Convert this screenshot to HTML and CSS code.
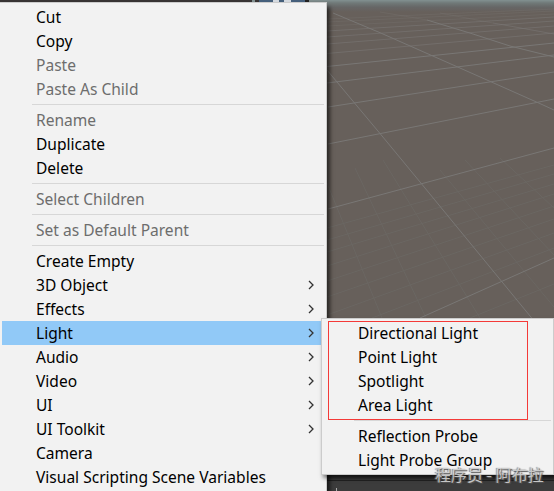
FILE: index.html
```html
<!DOCTYPE html>
<html lang="en">
<head>
<meta charset="utf-8">
<title>Hierarchy context menu</title>
<link rel="stylesheet" href="styles.css">
</head>
<body>
<div class="editor">
  <svg class="scene" width="554" height="491" viewBox="0 0 554 491">
    <defs>
      <linearGradient id="sky" x1="0" y1="0" x2="0" y2="1">
        <stop offset="0" stop-color="#829191"/><stop offset=".25" stop-color="#707978"/><stop offset=".6" stop-color="#666666"/><stop offset="1" stop-color="#67605b"/>
      </linearGradient>
    </defs>
    <rect width="554" height="491" fill="#67605b"/>
    <rect width="554" height="12" fill="url(#sky)"/>
    <g fill="none" stroke="#6c6965" stroke-width="1" opacity=".75">
      <path d="M327 228L554 165M327 240L554 174M327 252L554 184M327 266L554 194M327 281L554 206M327 297L554 219M327 315L554 233M372 318L554 248M470 318L554 284"/>
      <path d="M327 183L382 318M355 168L426 318M383 160L480 318M440 170L554 307M465 160L554 255M500 158L554 208"/>
    </g>
    <g fill="none" stroke="#797775" stroke-width="1">
      <path d="M420 318L554 258M328 209L554 148M328 144L554 99M328 107L554 72M327 83L554 55M327 66.500L554 43"/>
      <path d="M327 70L352 100L380 133.500L421.700 184L531.700 318M333 13L380 32.700L457 66.700L538 102.700L554 110M427 20L472 33.700L510 46L554 57"/>
      <path opacity=".6" d="M327 53.500L554 33M327 44L554 26M327 37L554 21M327 31L554 17M493 23L554 34"/>
      <path opacity=".3" d="M327 26L554 14M327 22L554 11M327 19L554 9M380 12L427 20M440 13L493 23"/>
    </g>
  </svg>
  <div class="toolbar"><i class="tool-gap"></i><i class="tool-on"><svg width="18" height="3"><path fill="#d5dae0" d="M0 0h6v2h-6zM11 0h7v2h-7z"/></svg></i><i class="tool-edge"></i></div>
  <div class="console"><i class="console-mark"></i></div>

  <div class="menu main">
    <div class="item">Cut</div>
    <div class="item">Copy</div>
    <div class="item off">Paste</div>
    <div class="item off">Paste As Child</div>
    <hr>
    <div class="item off">Rename</div>
    <div class="item">Duplicate</div>
    <div class="item">Delete</div>
    <hr>
    <div class="item off">Select Children</div>
    <hr>
    <div class="item off">Set as Default Parent</div>
    <hr>
    <div class="item">Create Empty</div>
    <div class="item">3D Object<svg class="arrow" viewBox="0 0 6 10"><path d="M1 1L5 5L1 9"/></svg></div>
    <div class="item">Effects<svg class="arrow" viewBox="0 0 6 10"><path d="M1 1L5 5L1 9"/></svg></div>
    <div class="item active">Light<svg class="arrow" viewBox="0 0 6 10"><path d="M1 1L5 5L1 9"/></svg></div>
    <div class="item">Audio<svg class="arrow" viewBox="0 0 6 10"><path d="M1 1L5 5L1 9"/></svg></div>
    <div class="item">Video<svg class="arrow" viewBox="0 0 6 10"><path d="M1 1L5 5L1 9"/></svg></div>
    <div class="item">UI<svg class="arrow" viewBox="0 0 6 10"><path d="M1 1L5 5L1 9"/></svg></div>
    <div class="item">UI Toolkit<svg class="arrow" viewBox="0 0 6 10"><path d="M1 1L5 5L1 9"/></svg></div>
    <div class="item">Camera</div>
    <div class="item">Visual Scripting Scene Variables</div>
  </div>

  <div class="menu sub">
    <div class="item">Directional Light</div>
    <div class="item">Point Light</div>
    <div class="item">Spotlight</div>
    <div class="item">Area Light</div>
    <hr>
    <div class="item">Reflection Probe</div>
    <div class="item">Light Probe Group</div>
  </div>
  <div class="callout"></div>
  <div class="watermark">程序员 - 阿布拉</div>
</div>
</body>
</html>
```
FILE: styles.css
```css
body { margin: 0; }
.editor {
  position: relative;
  width: 554px;
  height: 491px;
  overflow: hidden;
  background: #67605b;
  font-family: "Noto Sans", "Noto Sans CJK SC", sans-serif;
}
.scene { display: block; }
.toolbar {
  position: absolute;
  left: 0;
  top: 0;
  width: 309px;
  height: 3px;
  display: flex;
  background: #383434;
}
.tool-gap { width: 3px; margin-left: 252px; background: #829191; }
.tool-on { display: flex; width: 32px; padding-left: 14px; margin-left: 4px; background: #46607c; }
.tool-edge { flex: 1; background: #222; }
.console {
  position: absolute;
  left: 327px;
  right: 0;
  top: 475px;
  height: 16px;
  box-sizing: border-box;
  display: flex;
  align-items: flex-end;
  padding-left: 9px;
  background: linear-gradient(#242424, #383838 5px, #202020 5px, #202020 6px, #3c3c3c 6px);
}
.console-mark { width: 1px; height: 3px; background: #aaa; }
.menu {
  position: absolute;
  box-sizing: border-box;
  background: #f2f2f2;
  border: 1px solid #ccc;
  color: #000;
  font-size: 15.55px;
  line-height: 24px;
}
.main {
  left: -1px;
  top: 2px;
  width: 328px;
  height: 500px;
  padding: 2px 4px 0 2px;
  box-shadow: 3px 5px 4px rgba(0, 0, 0, .6);
}
.sub {
  left: 321px;
  top: 318px;
  width: 233px;
  height: 157px;
  padding: 2px;
  box-shadow: 2px 3px 4px rgba(0, 0, 0, .5);
}
.item {
  display: flex;
  align-items: flex-start;
  justify-content: space-between;
  box-sizing: border-box;
  height: 24px;
  padding: 0 8px 0 34px;
  white-space: nowrap;
}
.off { color: #6d6d6d; }
.active { background: #91c9f7; }
.arrow {
  width: 6px;
  height: 10px;
  margin-top: 7px;
  fill: none;
  stroke: #333;
  stroke-width: 1.3;
}
.menu hr {
  height: 1px;
  margin: 3px -2px 3px 30px;
  border: 0;
  background: #d7d7d7;
}
.sub hr { margin-right: 0; }
.callout {
  position: absolute;
  left: 328px;
  top: 321px;
  width: 200px;
  height: 99px;
  box-sizing: border-box;
  border: 1px solid #f43a38;
}
.watermark {
  position: absolute;
  left: 435px;
  top: 464px;
  font: 16px/20px "Noto Sans CJK SC", sans-serif;
  white-space: nowrap;
  color: rgba(215, 215, 215, .85);
  text-shadow: 1px 1px 1px #555, -1px 0 1px #888;
}
```
